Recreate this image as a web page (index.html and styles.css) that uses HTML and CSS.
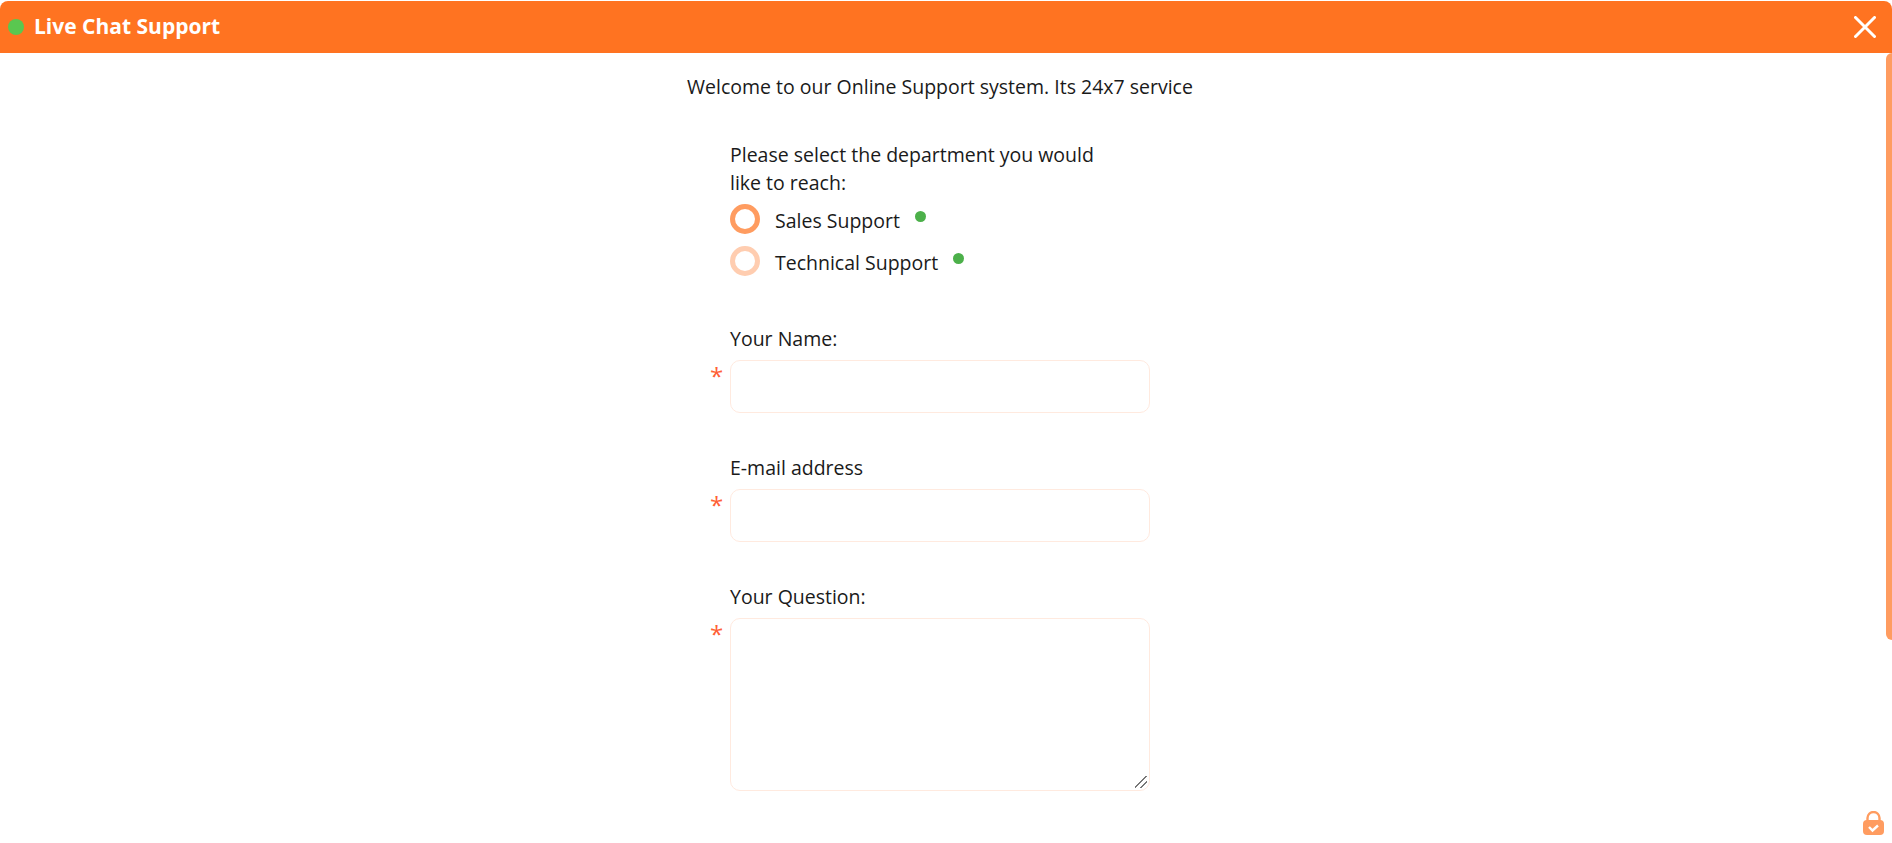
FILE: index.html
```html
<!DOCTYPE html>
<html>
<head>
    <title>Live Chat Support</title>
    <link rel="stylesheet" href="styles.css">
</head>
<body>

<div class="chat-header">
    <span class="status-dot"></span>
    <span class="chat-title">Live Chat Support</span>
    <svg class="close-icon" viewBox="0 0 22 22">
        <path d="M1.5 1.5L20.5 20.5M20.5 1.5L1.5 20.5"></path>
    </svg>
</div>

<div class="chat-body">
    <p class="welcome">Welcome to our Online Support system. Its 24x7 service</p>

    <form class="chat-form">
        <div class="dept-label">Please select the department you would like to reach:</div>
        <label class="dept-option">
            <span class="radio"></span>
            <span>Sales Support</span>
            <span class="online-dot"></span>
        </label>
        <label class="dept-option dept-option-off">
            <span class="radio"></span>
            <span>Technical Support</span>
            <span class="online-dot"></span>
        </label>

        <div class="field field-first">
            <label class="field-label">Your Name:</label>
            <div class="field-box">
                <span class="required">*</span>
                <input class="field-input" type="text">
            </div>
        </div>
        <div class="field">
            <label class="field-label">E-mail address</label>
            <div class="field-box">
                <span class="required">*</span>
                <input class="field-input" type="text">
            </div>
        </div>
        <div class="field">
            <label class="field-label">Your Question:</label>
            <div class="field-box">
                <span class="required">*</span>
                <textarea class="field-input field-area"></textarea>
            </div>
        </div>
    </form>
</div>

<div class="scroll-thumb"></div>

<svg class="lock-icon" viewBox="0 0 21 24">
    <path class="lock-shackle" d="M4.5 11V7a6 6 0 0 1 12 0v4"></path>
    <rect class="lock-body" x="0" y="9" width="21" height="15" rx="4"></rect>
    <path class="lock-check" d="M6 16l3.5 3.5 5.5-5"></path>
</svg>

</body>
</html>
```

FILE: styles.css
```css
html, body {
    height: 100%;
}

body {
    margin: 0;
    padding-top: 1px;
    box-sizing: border-box;
    overflow: hidden;
    background: white;
    color: #1a1a1a;
    font-family: "Open Sans", sans-serif;
    font-size: 19.5px;
}

.chat-header {
    display: flex;
    align-items: center;
    height: 52px;
    padding: 0 16px 0 8px;
    background: #ff7321;
    border-radius: 8px 8px 0 0;
}

.status-dot {
    width: 16px;
    height: 16px;
    margin-right: 10px;
    border-radius: 50%;
    background: #5ac750;
}

.chat-title {
    flex: 1;
    color: white;
    font-size: 21px;
    font-weight: bold;
    line-height: 50px;
    padding-bottom: 2px;
}

.close-icon {
    width: 22px;
    height: 22px;
    margin-bottom: 1px;
    fill: none;
    stroke: white;
    stroke-width: 3;
    stroke-linecap: round;
}

.chat-body {
    width: 1880px;
}

.welcome {
    margin: 20px 0 0;
    line-height: 28px;
    text-align: center;
}

.chat-form {
    width: 420px;
    margin: 40px auto 0;
}

.dept-label {
    width: 370px;
    line-height: 28px;
}

.dept-option {
    display: flex;
    align-items: center;
    height: 30px;
    margin-top: 12px;
}

.dept-label + .dept-option {
    margin-top: 7px;
}

.radio {
    box-sizing: border-box;
    width: 30px;
    height: 30px;
    margin: 0 15px 0 0;
    border: 5px solid #ff9c60;
    border-radius: 50%;
}

.dept-option-off .radio {
    border-color: #ffcdb0;
}

.dept-option span:nth-child(2) {
    padding-top: 2px;
}

.online-dot {
    width: 11px;
    height: 11px;
    margin: -6px 0 0 15px;
    border-radius: 50%;
    background: #4cb04a;
}

.field {
    margin-top: 41px;
}

.field-first {
    margin-top: 49px;
}

.field-label {
    display: block;
    padding-bottom: 7px;
    line-height: 28px;
}

.field-box {
    position: relative;
}

.required {
    position: absolute;
    left: -20px;
    top: 1px;
    color: #ff5f35;
    font-size: 24px;
    line-height: 30px;
}

.field-input {
    display: block;
    box-sizing: border-box;
    width: 420px;
    height: 53px;
    padding: 10px;
    border: 1px solid #ffeadf;
    border-radius: 10px;
    outline: none;
    font-family: inherit;
    font-size: 18px;
}

.field-area {
    height: 173px;
}

.field-area::-webkit-resizer {
    background: linear-gradient(135deg, transparent 43%, #777 43%, #777 52%, transparent 52%, transparent 69%, #777 69%, #777 77%, transparent 77%) no-repeat 1px 1px / 12px 12px;
}

.scroll-thumb {
    position: fixed;
    top: 53px;
    right: 0;
    width: 6px;
    height: 587px;
    background: #ff9c60;
    border-radius: 6px 0 0 6px;
}

.lock-icon {
    position: fixed;
    left: 1863px;
    top: 811px;
    width: 21px;
    height: 24px;
}

.lock-shackle {
    fill: none;
    stroke: #ff9c60;
    stroke-width: 2.4;
}

.lock-body {
    fill: #ff9c60;
}

.lock-check {
    fill: none;
    stroke: white;
    stroke-width: 2.4;
}
```
